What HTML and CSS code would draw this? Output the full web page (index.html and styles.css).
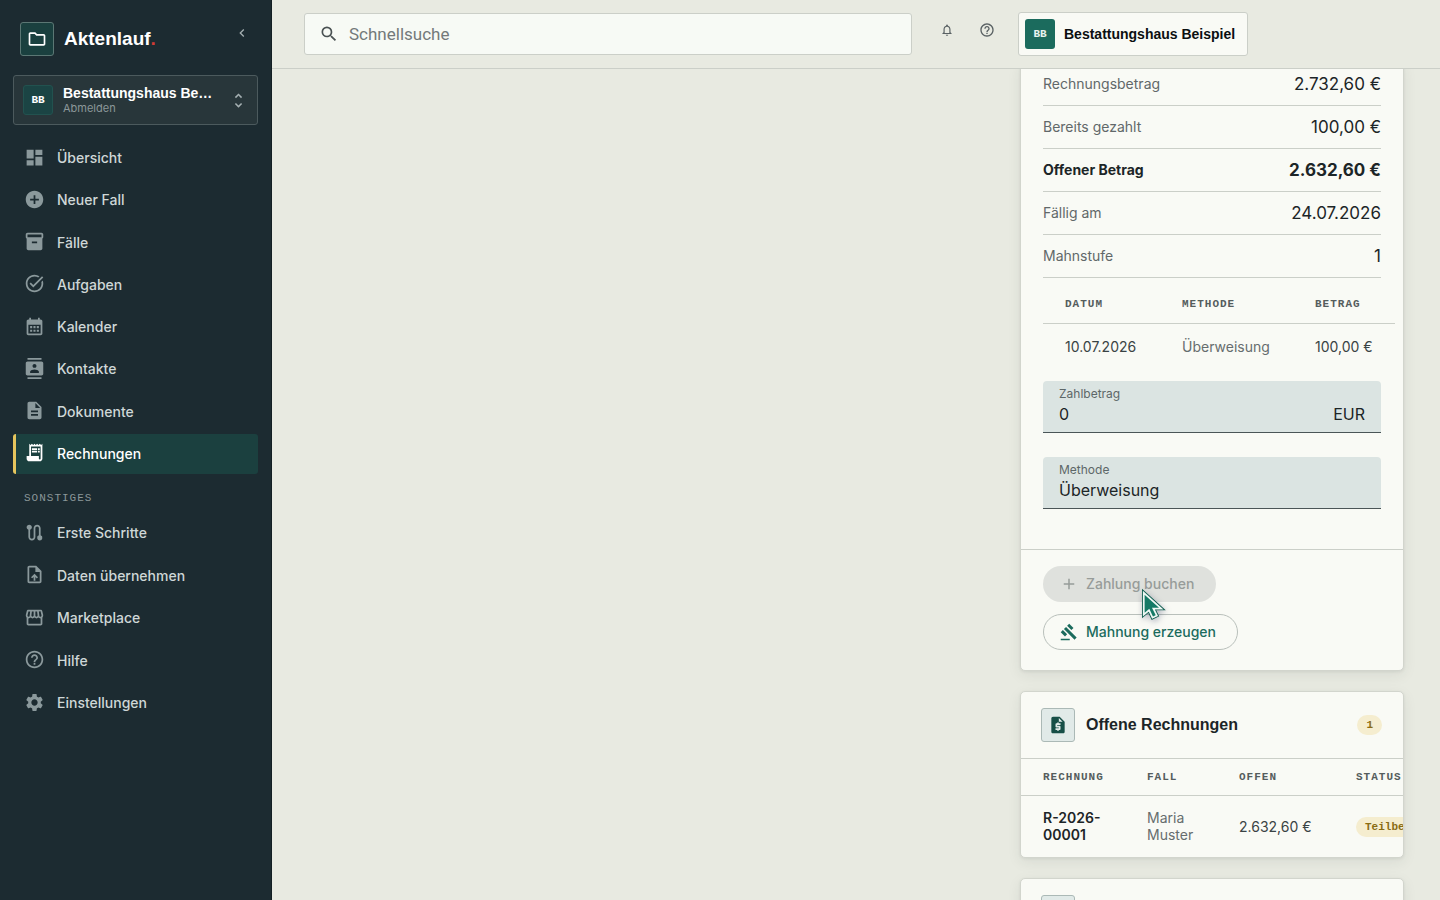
FILE: index.html
```html
<!DOCTYPE html>
<html lang="de">
<head>
<meta charset="utf-8">
<meta name="viewport" content="width=device-width, initial-scale=1">
<title>Aktenlauf – Rechnungen</title>
<link rel="stylesheet" href="styles.css">
</head>
<body>
<div class="app">
  <aside class="sidebar">
    <div class="brand">
      <span class="brand-mark"><svg viewBox="0 0 24 24"><path d="M9.17 6l2 2H20v10H4V6h5.170M10 4H4c-1.100 0-1.990.900-1.990 2L2 18c0 1.100.900 2 2 2h16c1.100 0 2-.900 2-2V8c0-1.100-.900-2-2-2h-8l-2-2z"/></svg></span>
      <span class="brand-name">Aktenlauf<span class="brand-dot">.</span></span>
      <button class="collapse" type="button" aria-label="Menü einklappen"><svg viewBox="0 0 24 24"><path d="M15.410 7.410 14 6l-6 6 6 6 1.410-1.410L10.830 12z"/></svg></button>
    </div>
    <button class="account" type="button">
      <span class="avatar avatar-dark">BB</span>
      <span class="account-text"><span class="account-name">Bestattungshaus Beispiel</span><span class="account-sub">Abmelden</span></span>
      <svg class="account-arrows" viewBox="0 0 24 24"><path d="M12 5.830 15.170 9l1.410-1.410L12 3 7.410 7.590 8.830 9 12 5.830zM12 18.170 8.830 15l-1.410 1.410L12 21l4.590-4.590L15.170 15 12 18.170z"/></svg>
    </button>
    <nav class="nav">
      <div class="nav-group nav-main">
        <a class="nav-item" href="#"><svg viewBox="0 0 24 24"><path d="M3 13h8V3H3v10zm0 8h8v-6H3v6zm10 0h8V11h-8v10zm0-18v6h8V3h-8z"/></svg>Übersicht</a>
        <a class="nav-item" href="#"><svg viewBox="0 0 24 24"><path d="M12 2C6.480 2 2 6.480 2 12s4.480 10 10 10 10-4.480 10-10S17.520 2 12 2zm5 11h-4v4h-2v-4H7v-2h4V7h2v4h4v2z"/></svg>Neuer Fall</a>
        <a class="nav-item" href="#"><svg viewBox="0 0 24 24"><path fill-rule="evenodd" d="M20 2H4c-1 0-2 .900-2 2v3.010c0 .720.430 1.340 1 1.690V20c0 1.100 1.100 2 2 2h14c.900 0 2-.900 2-2V8.700c.570-.350 1-.970 1-1.690V4c0-1.100-1-2-2-2zm-5 12H9v-2h6v2zm5-7H4V4h16v3z"/></svg>Fälle</a>
        <a class="nav-item" href="#"><svg viewBox="0 0 24 24"><path d="M22 5.180 10.590 16.600l-4.240-4.240 1.410-1.410 2.830 2.830 10-10L22 5.180zM19.790 10.220c.130.570.210 1.170.210 1.780 0 4.420-3.580 8-8 8s-8-3.580-8-8 3.580-8 8-8c1.580 0 3.040.460 4.280 1.250l1.440-1.440A9.900 9.900 0 0 0 12 2C6.480 2 2 6.480 2 12s4.480 10 10 10 10-4.480 10-10c0-1.190-.220-2.330-.600-3.390l-1.610 1.610z"/></svg>Aufgaben</a>
        <a class="nav-item" href="#"><svg viewBox="0 0 24 24"><path fill-rule="evenodd" d="M19 4h-1V2h-2v2H8V2H6v2H5c-1.110 0-1.990.900-1.990 2L3 20c0 1.100.890 2 2 2h14c1.100 0 2-.900 2-2V6c0-1.100-.900-2-2-2zm0 16H5V10h14v10zM7 11.500h2.400v2.400H7zm3.800 0h2.400v2.400h-2.400zm3.800 0H17v2.400h-2.400zM7 15.600h2.400V18H7zm3.800 0h2.400V18h-2.400zm3.800 0H17V18h-2.400z"/></svg>Kalender</a>
        <a class="nav-item" href="#"><svg viewBox="0 0 24 24"><path d="M20 0H4v2h16V0zM4 24h16v-2H4v2zM20 4H4c-1.100 0-2 .900-2 2v12c0 1.100.900 2 2 2h16c1.100 0 2-.900 2-2V6c0-1.100-.900-2-2-2zm-8 2.750c1.240 0 2.250 1.010 2.250 2.250s-1.010 2.250-2.250 2.250S9.750 10.240 9.750 9 10.760 6.750 12 6.750zM17 17H7v-1.500c0-1.670 3.330-2.500 5-2.500s5 .830 5 2.500V17z"/></svg>Kontakte</a>
        <a class="nav-item" href="#"><svg viewBox="0 0 24 24"><path d="M14 2H6c-1.100 0-1.990.900-1.990 2L4 20c0 1.100.890 2 1.990 2H18c1.100 0 2-.900 2-2V8l-6-6zm2 16H8v-2h8v2zm0-4H8v-2h8v2zm-3-5V3.500L18.500 9H13z"/></svg>Dokumente</a>
        <a class="nav-item active" href="#" aria-current="page"><svg viewBox="0 0 24 24"><path d="M19.500 3.500 18 2l-1.500 1.500L15 2l-1.500 1.500L12 2l-1.500 1.500L9 2 7.500 3.500 6 2v14H3v3c0 1.660 1.340 3 3 3h12c1.660 0 3-1.340 3-3V2l-1.500 1.500zM19 19c0 .550-.450 1-1 1s-1-.450-1-1v-3H8V5h11v14zM9 7h6v2H9zm7 0h2v2h-2zM9 10h6v2H9zm7 0h2v2h-2z"/></svg>Rechnungen</a>
      </div>
      <div class="nav-title">SONSTIGES</div>
      <div class="nav-group nav-more">
        <a class="nav-item" href="#"><svg viewBox="0 0 24 24"><path d="M19 15.180V7c0-2.210-1.790-4-4-4s-4 1.790-4 4v10c0 1.100-.900 2-2 2s-2-.900-2-2V8.820C8.160 8.400 9 7.300 9 6c0-1.660-1.340-3-3-3S3 4.340 3 6c0 1.300.840 2.400 2 2.820V17c0 2.210 1.790 4 4 4s4-1.790 4-4V7c0-1.100.900-2 2-2s2 .900 2 2v8.180A3 3 0 0 0 18 21a3 3 0 0 0 1-5.820z"/></svg>Erste Schritte</a>
        <a class="nav-item" href="#"><svg viewBox="0 0 24 24"><path fill-rule="evenodd" d="M14 2H6c-1.100 0-1.990.900-1.990 2L4 20c0 1.100.890 2 1.990 2H18c1.100 0 2-.900 2-2V8l-6-6zm4 18H6V4h7v5h5v11zM8 15.010l1.410 1.410L11 14.840V19h2v-4.160l1.590 1.590L16 15.010 12.010 11 8 15.010z"/></svg>Daten übernehmen</a>
        <a class="nav-item" href="#"><svg viewBox="0 0 24 24"><path fill-rule="evenodd" d="M21.900 8.890l-1.050-4.370c-.220-.900-1-1.520-1.910-1.520H5.050c-.900 0-1.690.630-1.900 1.520L2.100 8.890c-.240 1.020-.020 2.060.620 2.880.080.110.190.190.280.290V19c0 1.100.900 2 2 2h14c1.100 0 2-.900 2-2v-6.940c.090-.090.200-.180.280-.280.640-.820.870-1.870.620-2.890zM18.910 4.990l1.050 4.370c.100.420.010.840-.250 1.170-.140.180-.440.470-.940.470-.610 0-1.140-.490-1.210-1.140L16.980 5l1.930-.010zM13 5h1.960l.540 4.520c.050.390-.070.780-.330 1.070-.220.260-.540.410-.950.410-.670 0-1.220-.590-1.220-1.310V5zM8.490 9.520L9.040 5H11v4.690c0 .720-.550 1.310-1.290 1.310-.340 0-.650-.150-.890-.410-.250-.290-.370-.680-.330-1.070zM4.040 9.360L5.050 5h1.970l-.580 4.860c-.080.650-.600 1.140-1.210 1.140-.490 0-.800-.290-.930-.470-.270-.320-.360-.750-.260-1.170zM5 19v-6.030c.080.010.150.030.230.030.870 0 1.660-.360 2.240-.950.600.600 1.400.950 2.310.950.870 0 1.650-.360 2.230-.930.590.570 1.390.930 2.290.930.840 0 1.640-.350 2.240-.950.580.590 1.370.950 2.240.950.080 0 .150-.020.230-.030V19H5z"/></svg>Marketplace</a>
        <a class="nav-item" href="#"><svg viewBox="0 0 24 24"><path d="M11 18h2v-2h-2v2zm1-16C6.480 2 2 6.480 2 12s4.480 10 10 10 10-4.480 10-10S17.520 2 12 2zm0 18c-4.410 0-8-3.590-8-8s3.590-8 8-8 8 3.590 8 8-3.590 8-8 8zm0-14c-2.210 0-4 1.790-4 4h2c0-1.100.900-2 2-2s2 .900 2 2c0 2-3 1.750-3 5h2c0-2.250 3-2.500 3-5 0-2.210-1.790-4-4-4z"/></svg>Hilfe</a>
        <a class="nav-item" href="#"><svg viewBox="0 0 24 24"><path d="M19.140 12.940c.040-.300.060-.610.060-.940 0-.320-.020-.640-.070-.940l2.030-1.580c.180-.140.230-.410.120-.610l-1.920-3.320c-.120-.220-.370-.290-.590-.220l-2.390.960c-.500-.380-1.030-.700-1.620-.940l-.360-2.540c-.040-.240-.240-.410-.480-.410h-3.840c-.240 0-.430.170-.470.410l-.360 2.540c-.590.240-1.130.570-1.620.940l-2.390-.960c-.220-.080-.470 0-.590.220L2.740 8.870c-.120.210-.080.470.120.610l2.030 1.580c-.050.300-.090.630-.090.940s.020.640.070.940l-2.030 1.580c-.180.140-.230.410-.120.610l1.920 3.320c.120.220.370.290.590.220l2.390-.960c.500.380 1.030.700 1.620.940l.360 2.540c.050.240.240.410.480.410h3.840c.240 0 .440-.170.470-.410l.360-2.540c.590-.240 1.130-.560 1.620-.940l2.390.960c.220.080.470 0 .590-.220l1.920-3.320c.120-.220.070-.470-.120-.610l-2.010-1.580zM12 15.600c-1.980 0-3.600-1.620-3.600-3.600s1.620-3.600 3.600-3.600 3.600 1.620 3.600 3.600-1.620 3.600-3.600 3.600z"/></svg>Einstellungen</a>
      </div>
    </nav>
  </aside>

  <div class="workspace">
    <header class="topbar">
      <label class="search">
        <svg viewBox="0 0 24 24"><path d="M15.500 14h-.790l-.280-.270A6.470 6.470 0 0 0 16 9.500 6.500 6.500 0 1 0 9.500 16c1.610 0 3.090-.590 4.230-1.570l.270.280v.790l5 4.990L20.490 19l-4.990-5zm-6 0C7.010 14 5 11.990 5 9.500S7.010 5 9.500 5 14 7.010 14 9.500 11.990 14 9.500 14z"/></svg>
        <input type="search" placeholder="Schnellsuche" aria-label="Schnellsuche">
      </label>
      <div class="tools">
        <button class="tool bell" type="button" aria-label="Benachrichtigungen"><svg viewBox="0 0 24 24"><path d="M12 22c1.100 0 2-.900 2-2h-4c0 1.100.900 2 2 2zm6-6v-5c0-3.070-1.630-5.640-4.500-6.320V4c0-.830-.670-1.500-1.500-1.500s-1.500.670-1.500 1.500v.680C7.640 5.360 6 7.920 6 11v5l-2 2v1h16v-1l-2-2zm-2 1H8v-6c0-2.480 1.510-4.500 4-4.500s4 2.020 4 4.500v6z"/></svg></button>
        <button class="tool" type="button" aria-label="Hilfe"><svg viewBox="0 0 24 24"><path d="M11 18h2v-2h-2v2zm1-16C6.480 2 2 6.480 2 12s4.480 10 10 10 10-4.480 10-10S17.520 2 12 2zm0 18c-4.410 0-8-3.590-8-8s3.590-8 8-8 8 3.590 8 8-3.590 8-8 8zm0-14c-2.210 0-4 1.790-4 4h2c0-1.100.900-2 2-2s2 .900 2 2c0 2-3 1.750-3 5h2c0-2.250 3-2.500 3-5 0-2.210-1.790-4-4-4z"/></svg></button>
      </div>
      <button class="profile" type="button"><span class="avatar">BB</span>Bestattungshaus Beispiel</button>
    </header>

    <main class="content">
      <div class="rail">
        <section class="card card-scrolled">
          <div class="card-body">
            <dl class="facts">
              <div class="fact"><dt>Rechnungsbetrag</dt><dd>2.732,60 €</dd></div>
              <div class="fact"><dt>Bereits gezahlt</dt><dd>100,00 €</dd></div>
              <div class="fact fact-strong"><dt>Offener Betrag</dt><dd>2.632,60 €</dd></div>
              <div class="fact"><dt>Fällig am</dt><dd>24.07.2026</dd></div>
              <div class="fact"><dt>Mahnstufe</dt><dd>1</dd></div>
            </dl>
            <table class="table payments">
              <thead><tr><th>DATUM</th><th>METHODE</th><th>BETRAG</th></tr></thead>
              <tbody><tr><td>10.07.2026</td><td class="muted">Überweisung</td><td>100,00 €</td></tr></tbody>
            </table>
            <div class="fields">
              <div class="field">
                <label for="amount">Zahlbetrag</label>
                <div class="field-line"><input id="amount" type="text" inputmode="decimal" value="0"><span>EUR</span></div>
              </div>
              <div class="field">
                <label for="method">Methode</label>
                <div class="field-line"><select id="method"><option>Überweisung</option></select></div>
              </div>
            </div>
          </div>
          <div class="actions">
            <button class="btn btn-disabled" type="button" disabled><svg viewBox="0 0 24 24"><path d="M19 13h-6v6h-2v-6H5v-2h6V5h2v6h6v2z"/></svg>Zahlung buchen</button>
            <button class="btn btn-outline" type="button"><svg viewBox="0 0 24 24"><path d="M1 21h12v2H1v-2zM5.240 8.070l2.830-2.830 14.140 14.140-2.830 2.830L5.240 8.070zM12.320 1l5.660 5.660-2.830 2.830-5.660-5.660L12.320 1zM3.830 9.480l5.660 5.660-2.830 2.830L1 12.310l2.830-2.830z"/></svg>Mahnung erzeugen</button>
            <svg class="pointer" viewBox="0 0 24 32"><path d="M2 2v25l6-5 4 8.500 5-2.500-4-8h9z" fill="#147a66" stroke="#0d5c4d" stroke-width="4"/><path d="M2 2v25l6-5 4 8.500 5-2.500-4-8h9z" fill="#147a66" stroke="#eef8f4" stroke-width="2"/></svg>
          </div>
        </section>

        <section class="card">
          <header class="card-head">
            <span class="card-icon"><svg viewBox="0 0 24 24"><path d="M14 2H6c-1.100 0-1.990.900-1.990 2L4 20c0 1.100.890 2 1.990 2H18c1.100 0 2-.900 2-2V8l-6-6zm1 10h-4v1h3c.550 0 1 .450 1 1v3c0 .550-.450 1-1 1h-1v1h-2v-1H9v-2h4v-1h-3c-.550 0-1-.450-1-1v-3c0-.550.450-1 1-1h1V9h2v1h2v2zm-2-4V3.500L17.500 8H13z"/></svg></span>
            <h2>Offene Rechnungen</h2>
            <span class="pill">1</span>
          </header>
          <div class="table-clip">
            <table class="table invoices">
              <thead><tr><th>RECHNUNG</th><th>FALL</th><th>OFFEN</th><th>STATUS</th></tr></thead>
              <tbody><tr><td class="strong">R-2026-<br>00001</td><td class="muted">Maria<br>Muster</td><td>2.632,60 €</td><td><span class="pill pill-status">Teilbezahlt</span></td></tr></tbody>
            </table>
          </div>
        </section>

        <section class="card">
          <header class="card-head"><span class="card-icon"></span></header>
        </section>
      </div>
    </main>
  </div>
</div>
</body>
</html>
```

FILE: styles.css
```css
:root {
  --sans: "Inter", "Open Sans", "Liberation Sans", sans-serif;
  --head: "Liberation Sans", Arial, sans-serif;
  --mono: "Liberation Mono", monospace;
  --paper: #f9faf5;
  --line: #cbcfc8;
  --green: #1b6b5d;
}
* { box-sizing: border-box; }
body { margin: 0; background: #e8eae1; color: #1c2527; font: 14px/20px var(--sans); }
button, input, select { font: inherit; color: inherit; }
button { cursor: pointer; }
svg { display: block; fill: currentColor; flex: none; }

.app { display: flex; height: 100vh; overflow: hidden; }

/* Sidebar */
.sidebar { flex: 0 0 272px; min-width: 0; padding: 0 13px; background: #1c2b31; border-right: 1px solid #131f24; color: #cfd7d7; }
.brand { display: flex; align-items: center; gap: 10px; height: 75px; padding: 2px 6px 0 7px; }
.brand-mark { display: grid; place-items: center; width: 34px; height: 34px; border: 1px solid #5b7774; border-radius: 3px; background: #1a403f; color: #fff; }
.brand-mark svg { width: 20px; height: 20px; }
.brand-name { font: 700 19px/24px var(--head); color: #fff; }
.brand-dot { color: #d23b35; }
.collapse { margin: 0 0 12px auto; padding: 2px; border: 0; background: none; color: #a5b0b2; }
.collapse svg { width: 16px; height: 16px; }
.account { display: flex; align-items: center; gap: 10px; width: 100%; height: 50px; padding: 0 9px; border: 1px solid #4c5a5d; border-radius: 3px; background: #28363a; text-align: left; }
.avatar { display: grid; place-items: center; flex: none; width: 30px; height: 30px; border-radius: 3px; background: var(--green); color: #e6f3ee; font: 700 11px/14px var(--mono); }
.avatar-dark { background: #1b4444; border: 1px solid #22524f; color: #fff; }
.account-text { flex: 1; min-width: 0; display: flex; flex-direction: column; padding-right: 4px; }
.account-name { overflow: hidden; text-overflow: ellipsis; white-space: nowrap; color: #fff; font: 700 14px/17px var(--head); }
.account-sub { color: #8b9799; font-size: 11px; line-height: 13px; }
.account-arrows { width: 19px; height: 19px; color: #a5b0b2; }

.nav { padding-top: 13px; }
.nav-group { display: flex; flex-direction: column; justify-content: space-between; }
.nav-main { min-height: 336px; }
.nav-more { min-height: 210px; }
.nav-item { display: flex; align-items: center; gap: 12px; height: 40px; padding-left: 8px; border-left: 3px solid transparent; border-radius: 3px; color: #cfd7d7; font-size: 14px; font-weight: 500; text-decoration: none; }
.nav-item svg { width: 21px; height: 21px; margin-bottom: 2px; color: #8b999c; }
.nav-item.active { border-left-color: #e5c55d; background: #1b403f; color: #fff; }
.nav-item.active svg { color: #fff; }
.nav-title { padding: 16px 0 7px 11px; color: #8b9799; font: 11px/16px var(--mono); letter-spacing: 1px; }

/* Top bar */
.workspace { flex: 1; min-width: 0; display: flex; flex-direction: column; }
.topbar { display: flex; align-items: center; flex: none; height: 69px; padding: 0 32px; border-bottom: 1px solid var(--line); }
.search { display: flex; align-items: center; gap: 10px; flex: 0 1 608px; height: 42px; padding: 0 14px; border: 1px solid var(--line); border-radius: 3px; background: #f7faf5; color: #4a5253; }
.search svg { width: 20px; height: 20px; }
.search input { flex: 1; min-width: 0; padding: 0; border: 0; outline: 0; background: none; font: 17px/24px "Roboto", sans-serif; }
.search input::placeholder { color: #73797a; opacity: 1; }
.tools { display: flex; gap: 16px; padding: 0 19px 8px 23px; }
.tool { display: grid; place-items: center; width: 24px; height: 24px; padding: 0; border: 0; background: none; color: #596163; }
.tool svg { width: 16px; height: 16px; }
.tool.bell svg { width: 14px; height: 14px; }
.profile { display: flex; align-items: center; gap: 9px; height: 44px; padding: 0 12px 0 6px; border: 1px solid var(--line); border-radius: 3px; background: var(--paper); color: #0b0f10; font: 700 14px/20px var(--head); white-space: nowrap; }

/* Content */
.content { flex: 1; min-height: 0; padding: 0 36px; overflow: hidden; }
.rail { display: flex; flex-direction: column; gap: 20px; width: 384px; margin-left: auto; }
.card { border: 1px solid #d2d5cd; border-radius: 5px; background: var(--paper); box-shadow: 0 4px 14px rgba(40, 50, 45, .08), 0 1px 3px rgba(40, 50, 45, .08); overflow: hidden; }
.card-scrolled { margin-top: -7px; }
.card-body { padding: 0 22px 40px; }
.facts { margin: 0; }
.fact { display: flex; align-items: center; justify-content: space-between; height: 43px; border-bottom: 1px solid var(--line); }
.fact dt { color: #616869; }
.fact dd { margin: 0; font-size: 17px; line-height: 22px; }
.fact-strong dt, .fact-strong dd { color: #1c2527; font-weight: 700; }

.table { border-collapse: collapse; text-align: left; }
.table th { height: 37px; padding: 0; border-bottom: 1px solid var(--line); color: #555d5d; font: 700 11px/16px var(--mono); letter-spacing: 1px; }
.table td { padding: 0; color: #3a4344; white-space: nowrap; }
.table .muted { color: #666d6e; }
.table .strong { color: #1c2527; font-weight: 600; }
.payments { table-layout: fixed; width: 352px; margin: 8px 0 11px; }
.payments td { height: 47px; }
.payments th, .payments td { padding-left: 22px; }
.payments th:nth-child(1) { width: 117px; }
.payments th:nth-child(2) { width: 133px; }

.fields { display: flex; flex-direction: column; gap: 24px; }
.field { height: 52px; padding: 5px 16px 0; border-bottom: 1px solid #4a5557; border-radius: 4px 4px 0 0; background: #dbe4e2; }
.field label { display: block; color: #5d6768; font-size: 12px; line-height: 16px; }
.field-line { display: flex; align-items: center; height: 24px; font-size: 16px; line-height: 24px; }
.field input, .field select { flex: 1; min-width: 0; height: 24px; padding: 0; border: 0; outline: 0; background: none; appearance: none; }

.actions { position: relative; display: flex; flex-direction: column; align-items: flex-start; gap: 12px; padding: 16px 22px 20px; border-top: 1px solid var(--line); }
.btn { display: flex; align-items: center; gap: 8px; height: 36px; padding: 0 21px 0 16px; border: 1px solid transparent; border-radius: 18px; font-weight: 500; }
.btn svg { width: 18px; height: 18px; }
.btn-disabled { background: #dfe1dd; color: #979c99; cursor: default; }
.btn-outline { border-color: #b9c0bb; background: transparent; color: var(--green); }
.pointer { position: absolute; left: 121px; top: 41px; width: 21px; height: 28px; overflow: visible; filter: drop-shadow(1px 2px 3px rgba(40, 50, 90, .35)); }

.card-head { display: flex; align-items: center; gap: 11px; height: 67px; padding: 0 21px 0 20px; border-bottom: 1px solid var(--line); }
.card-head h2 { flex: 1; margin: 0; font: 700 16px/22px var(--head); }
.card-icon { display: grid; place-items: center; width: 34px; height: 34px; border: 1px solid #abb9b6; border-radius: 3px; background: #e1eae8; color: #174f47; }
.card-icon svg { width: 20px; height: 20px; }
.pill { display: inline-block; padding: 2px 9px; border-radius: 10px; background: #f5edcf; color: #8a6c14; font: 700 11px/16px var(--mono); }
.table-clip { overflow: hidden; }
.invoices { table-layout: fixed; width: 480px; }
.invoices th, .invoices td { padding-left: 22px; }
.invoices th { height: 36px; }
.invoices td { height: 62px; line-height: 17px; }
.invoices th:nth-child(1) { width: 104px; }
.invoices th:nth-child(2) { width: 92px; }
.invoices th:nth-child(3) { width: 117px; }
```
